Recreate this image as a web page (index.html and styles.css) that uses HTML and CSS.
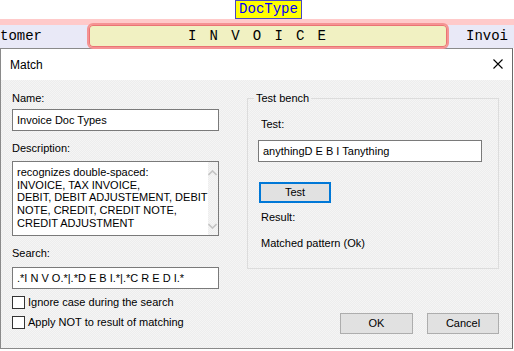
FILE: index.html
```html
<!DOCTYPE html>
<html>
<head>
<meta charset="utf-8">
<link rel="stylesheet" href="styles.css">
</head>
<body>
<div class="page">
  <div class="toprow"><span class="doctype">DocType</span></div>
  <div class="band">
    <span class="bandtext left">tomer</span>
    <div class="invoice">INVOICE</div>
    <span class="bandtext right">Invoi</span>
  </div>
  <div class="dialog">
    <div class="titlebar">
      <span class="title">Match</span>
      <svg class="close" width="10" height="10" viewBox="0 0 10 10"><path d="M0.5 0.5L9.5 9.5M9.5 0.5L0.5 9.5" stroke="#000" stroke-width="1.1" fill="none"/></svg>
    </div>
    <div class="body">
      <div class="leftcol">
        <div class="label l-name">Name:</div>
        <div class="input w-left">Invoice Doc Types</div>
        <div class="label l-desc">Description:</div>
        <div class="memo">
          <div class="memotext">recognizes double-spaced:<br>INVOICE, TAX INVOICE,<br>DEBIT, DEBIT ADJUSTEMENT, DEBIT<br>NOTE, CREDIT, CREDIT NOTE,<br>CREDIT ADJUSTMENT</div>
          <div class="scroll">
            <svg width="9" height="6" viewBox="0 0 9 6"><path d="M0.5 5L4.5 1L8.5 5" stroke="#c4c4c4" stroke-width="1.6" fill="none"/></svg>
            <svg width="9" height="6" viewBox="0 0 9 6"><path d="M0.5 1L4.5 5L8.5 1" stroke="#c4c4c4" stroke-width="1.6" fill="none"/></svg>
          </div>
        </div>
        <div class="label l-search">Search:</div>
        <div class="input w-left">.*I N V O.*|.*D E B I.*|.*C R E D I.*</div>
        <div class="check c1"><span class="box"></span><span>Ignore case during the search</span></div>
        <div class="check c2"><span class="box"></span><span>Apply NOT to result of matching</span></div>
      </div>
      <div class="rightcol">
        <div class="group">
          <span class="legend">Test bench</span>
          <div class="label l-test">Test:</div>
          <div class="input w-test">anythingD E B I Tanything</div>
          <div class="btn btn-test">Test</div>
          <div class="label l-result">Result:</div>
          <div class="label l-matched">Matched pattern (Ok)</div>
        </div>
        <div class="buttons">
          <div class="btn btn-ok">OK</div>
          <div class="btn btn-cancel">Cancel</div>
        </div>
      </div>
    </div>
  </div>
</div>
</body>
</html>
```
FILE: styles.css
```css
html, body {
  margin: 0;
  padding: 0;
  background: #ffffff;
}
.page {
  width: 514px;
  height: 351px;
  overflow: hidden;
  font-family: "Liberation Sans", Arial, sans-serif;
  font-size: 11px;
  color: #000;
}
.toprow {
  height: 19px;
  display: flex;
  padding-left: 235px;
}
.doctype {
  box-sizing: border-box;
  height: 19px;
  width: 67px;
  background: #ffff00;
  border: 1px solid #4848c0;
  color: #0000ff;
  font-family: "Liberation Mono", "Courier New", monospace;
  font-size: 14px;
  line-height: 17px;
  text-align: center;
}
.band {
  height: 29px;
  display: flex;
  align-items: flex-start;
  background: linear-gradient(#ffcaca 0 6px, #e9e9f7 6px);
  position: relative;
}
.bandtext {
  font-family: "Liberation Mono", "Courier New", monospace;
  font-size: 14px;
  line-height: 16px;
  margin-top: 9px;
}
.bandtext.left {
  width: 87px;
}
.bandtext.right {
  margin-left: 17px;
}
.invoice {
  box-sizing: border-box;
  margin-top: 4px;
  width: 362px;
  height: 26px;
  border: 2px solid #f59393;
  box-shadow: inset 0 0 0 1px #ea7474;
  border-radius: 6px;
  background: #f1f1c2;
  font-family: "Liberation Mono", "Courier New", monospace;
  font-size: 14px;
  line-height: 22px;
  letter-spacing: 13.2px;
  padding-left: 99px;
}
.dialog {
  box-sizing: border-box;
  width: 513px;
  height: 301px;
  border: 1px solid #8a8a8a;
  border-right-color: #6a6a6a;
  background: repeating-conic-gradient(#ededed 0 25%, #f5f5f5 0 50%) 0 0 / 2px 2px;
  display: flex;
  flex-direction: column;
}
.titlebar {
  height: 31px;
  background: #fff;
  display: flex;
  align-items: center;
  justify-content: space-between;
  padding: 0 9px 0 9px;
  flex-shrink: 0;
}
.title {
  font-size: 12px;
  line-height: 14px;
  margin-top: 0px;
}
.close {
  display: block;
  margin-top: -1px;
}
.body {
  display: flex;
  padding: 0 12px 0 11px;
  gap: 28px;
}
.leftcol {
  width: 207px;
  display: flex;
  flex-direction: column;
}
.label {
  line-height: 14px;
  height: 14px;
  white-space: nowrap;
}
.l-name { margin-top: 11px; }
.l-desc { margin-top: 10px; }
.l-search { margin-top: 10px; }
.input {
  box-sizing: border-box;
  height: 22px;
  background: #fff;
  border: 1px solid #7a7a7a;
  line-height: 20px;
  padding-left: 4px;
  white-space: nowrap;
  overflow: hidden;
}
.leftcol .input { margin-top: 4px; }
.leftcol .l-search + .input { margin-top: 7px; }
.w-left { width: 207px; }
.memo {
  box-sizing: border-box;
  margin-top: 6px;
  width: 207px;
  height: 75px;
  background: #fff;
  border: 1px solid #7a7a7a;
  display: flex;
}
.memotext {
  flex: 1;
  padding: 4px 0 0 4px;
  line-height: 12.7px;
  white-space: nowrap;
}
.scroll {
  width: 17px;
  background: repeating-conic-gradient(#ededed 0 25%, #f6f6f6 0 50%) 0 0 / 2px 2px;
  display: flex;
  flex-direction: column;
  align-items: center;
  justify-content: space-between;
  padding: 8px 0 6px;
}
.scroll svg { display: block; }
.check {
  display: flex;
  align-items: center;
  gap: 3px;
  height: 14px;
  line-height: 14px;
  white-space: nowrap;
}
.c1 { margin-top: 6px; }
.c2 { margin-top: 6px; }
.box {
  box-sizing: border-box;
  width: 13px;
  height: 13px;
  background: #fff;
  border: 1px solid #333;
  flex-shrink: 0;
}
.rightcol {
  width: 252px;
  display: flex;
  flex-direction: column;
}
.group {
  box-sizing: border-box;
  margin-top: 18px;
  height: 171px;
  border: 1px solid #dcdcdc;
  position: relative;
  display: flex;
  flex-direction: column;
  align-items: flex-start;
  padding: 18px 16px 0 10px;
}
.legend {
  position: absolute;
  left: 6px;
  top: -8px;
  padding: 0 2px;
  line-height: 14px;
  background: #f1f1f1;
}
.l-test { margin-left: 3px; }
.w-test { width: 224px; margin-top: 9px; }
.btn {
  box-sizing: border-box;
  height: 21px;
  background: #e1e1e1;
  border: 1px solid #adadad;
  text-align: center;
  line-height: 19px;
}
.btn-test {
  margin-top: 20px;
  margin-left: 1px;
  width: 72px;
  border: 2px solid #0078d7;
  line-height: 17px;
}
.l-result { margin-top: 7px; margin-left: 3px; }
.l-matched { margin-top: 12px; margin-left: 3px; }
.buttons {
  margin-top: 44px;
  display: flex;
  justify-content: flex-end;
  gap: 14px;
}
.btn-ok { width: 73px; }
.btn-cancel { width: 72px; }
```
